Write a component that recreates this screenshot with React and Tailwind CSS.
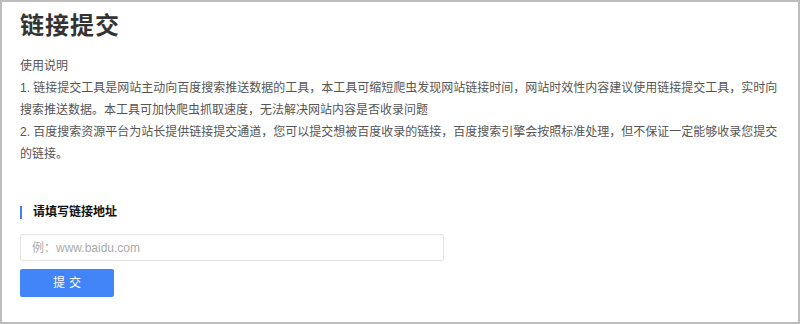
import React, { useState } from 'react';

const font = { fontFamily: '"Liberation Sans", "Noto Sans CJK SC", sans-serif' };

export default function App() {
  const [url, setUrl] = useState('');

  return (
    <div className="h-[324px] w-[800px] border-2 border-[#bdbdbd] bg-white px-[18px] pt-2 text-[#555]" style={font}>
      {/* Title */}
      <h1 className="text-[24px] leading-[32px] font-bold tracking-[1px] text-[#333]">链接提交</h1>

      {/* Description */}
      <div className="mt-[13px] w-[760px] text-[12px] leading-[22px]">
        <p>使用说明</p>
        <p>1. 链接提交工具是网站主动向百度搜索推送数据的工具，本工具可缩短爬虫发现网站链接时间，网站时效性内容建议使用链接提交工具，实时向搜索推送数据。本工具可加快爬虫抓取速度，无法解决网站内容是否收录问题</p>
        <p>2. 百度搜索资源平台为站长提供链接提交通道，您可以提交想被百度收录的链接，百度搜索引擎会按照标准处理，但不保证一定能够收录您提交的链接。</p>
      </div>

      {/* Form */}
      <div className="mt-[40px] flex items-center gap-[11px]">
        <span className="h-[13px] w-[2px] bg-[#3f82f7]"></span>
        <h2 className="text-[12px] leading-[14px] font-bold text-[#111]">请填写链接地址</h2>
      </div>

      <input
        value={url}
        onChange={e => setUrl(e.target.value)}
        placeholder="例：www.baidu.com"
        className="mt-[15px] block h-[27px] w-[424px] rounded-[2px] border border-[#e3e3e3] px-[11px] text-[12px] text-[#333] outline-none placeholder:text-[#aaa]"
        style={font}
      />

      <button className="mt-[8px] block h-[28px] w-[94px] rounded-[2px] bg-[#4285f8] pl-[4px] text-[12px] tracking-[4px] text-white" style={font}>
        提交
      </button>
    </div>
  );
}
